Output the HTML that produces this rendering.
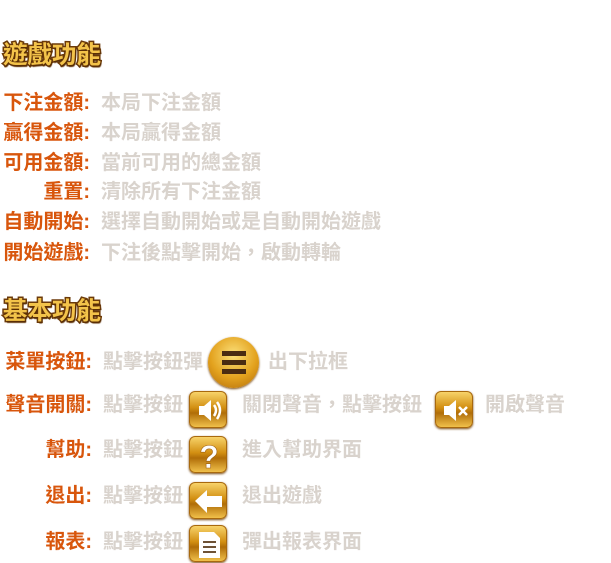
<!DOCTYPE html>
<html><head><meta charset="utf-8"><style>
body{margin:0;width:611px;height:563px;background:#fff;overflow:hidden;position:relative;font-family:"Liberation Sans","Noto Sans CJK TC",sans-serif;font-weight:bold;font-size:20px}
.h{position:absolute;left:3px;font-size:24.5px;color:#f3c34a;-webkit-text-stroke:3px #6b3a0a;paint-order:stroke fill;text-shadow:1px 2px 1px #5a2e05;line-height:30px}
.l{position:absolute;color:#d8560c;text-align:right;white-space:nowrap;line-height:26px}
.d{position:absolute;color:#d9d3cd;white-space:nowrap;line-height:26px}
.ic{position:absolute;width:38px;height:37px;border-radius:6px;background:linear-gradient(#f7d36a,#d28f12 45%,#b06d08 60%,#f0c04a);box-shadow:0 1px 2px #7a4a10;border:1px solid #a8690e;box-sizing:border-box}
.ic svg{position:absolute;left:0;top:0}
</style></head><body>
<div class="h" style="top:41px">遊戲功能</div>
<div class="l" style="right:521px;top:90px">下注金額:</div><div class="d" style="left:101px;top:90px">本局下注金額</div>
<div class="l" style="right:521px;top:120px">贏得金額:</div><div class="d" style="left:101px;top:120px">本局贏得金額</div>
<div class="l" style="right:521px;top:150px">可用金額:</div><div class="d" style="left:101px;top:150px">當前可用的總金額</div>
<div class="l" style="right:521px;top:179px">重置:</div><div class="d" style="left:101px;top:179px">清除所有下注金額</div>
<div class="l" style="right:521px;top:209px">自動開始:</div><div class="d" style="left:101px;top:209px">選擇自動開始或是自動開始遊戲</div>
<div class="l" style="right:521px;top:240px">開始遊戲:</div><div class="d" style="left:101px;top:240px">下注後點擊開始，啟動轉輪</div>

<div class="h" style="top:297px">基本功能</div>
<div class="l" style="right:519px;top:349px">菜單按鈕:</div><div class="d" style="left:103px;top:349px">點擊按鈕彈</div>
<div style="position:absolute;left:208px;top:337px;width:51px;height:51px;border-radius:50%;background:radial-gradient(circle at 50% 35%,#fbe07a,#e3a21e 55%,#b06a08);box-shadow:0 1px 2px #7a4a10"><div style="position:absolute;left:14px;top:14px;width:24px;height:5px;background:#4a2c12"></div><div style="position:absolute;left:14px;top:23px;width:24px;height:5px;background:#4a2c12"></div><div style="position:absolute;left:14px;top:32px;width:24px;height:5px;background:#4a2c12"></div></div>
<div class="d" style="left:268px;top:349px">出下拉框</div>

<div class="l" style="right:519px;top:392px">聲音開關:</div><div class="d" style="left:103px;top:392px">點擊按鈕</div>
<div class="ic" style="left:189px;top:391px"><svg width="38" height="37"><path d="M9 14h5l7-6v21l-7-6H9z" fill="#fff"/><path d="M24 13q4 5 0 11M27 10q6 8 0 17" stroke="#fff" stroke-width="2.5" fill="none"/></svg></div>
<div class="d" style="left:242px;top:392px">關閉聲音，點擊按鈕</div>
<div class="ic" style="left:435px;top:391px"><svg width="38" height="37"><path d="M8 14h5l7-6v21l-7-6H8z" fill="#fff"/><path d="M23 15l8 8M31 15l-8 8" stroke="#fff" stroke-width="2.5"/></svg></div>
<div class="d" style="left:485px;top:392px">開啟聲音</div>

<div class="l" style="right:519px;top:437px">幫助:</div><div class="d" style="left:103px;top:437px">點擊按鈕</div>
<div class="ic" style="left:189px;top:436px"><svg width="38" height="37"><text x="19" y="31" text-anchor="middle" font-family="Liberation Sans" font-weight="bold" font-size="32" fill="#fff" stroke="#a06010" stroke-width="0.6">?</text></svg></div>
<div class="d" style="left:242px;top:437px">進入幫助界面</div>

<div class="l" style="right:519px;top:483px">退出:</div><div class="d" style="left:103px;top:483px">點擊按鈕</div>
<div class="ic" style="left:189px;top:482px"><svg width="38" height="37"><path d="M5 18l12-11v6h15v11H17v6z" fill="#fff"/></svg></div>
<div class="d" style="left:242px;top:483px">退出遊戲</div>

<div class="l" style="right:519px;top:529px">報表:</div><div class="d" style="left:103px;top:529px">點擊按鈕</div>
<div class="ic" style="left:189px;top:525px"><svg width="38" height="37"><path d="M9 6h15l6 6v20H9z" fill="#fff"/><path d="M13 16h13M13 21h13M13 26h13" stroke="#5a3a1a" stroke-width="1.8"/></svg></div>
<div class="d" style="left:242px;top:529px">彈出報表界面</div>
</body></html>
